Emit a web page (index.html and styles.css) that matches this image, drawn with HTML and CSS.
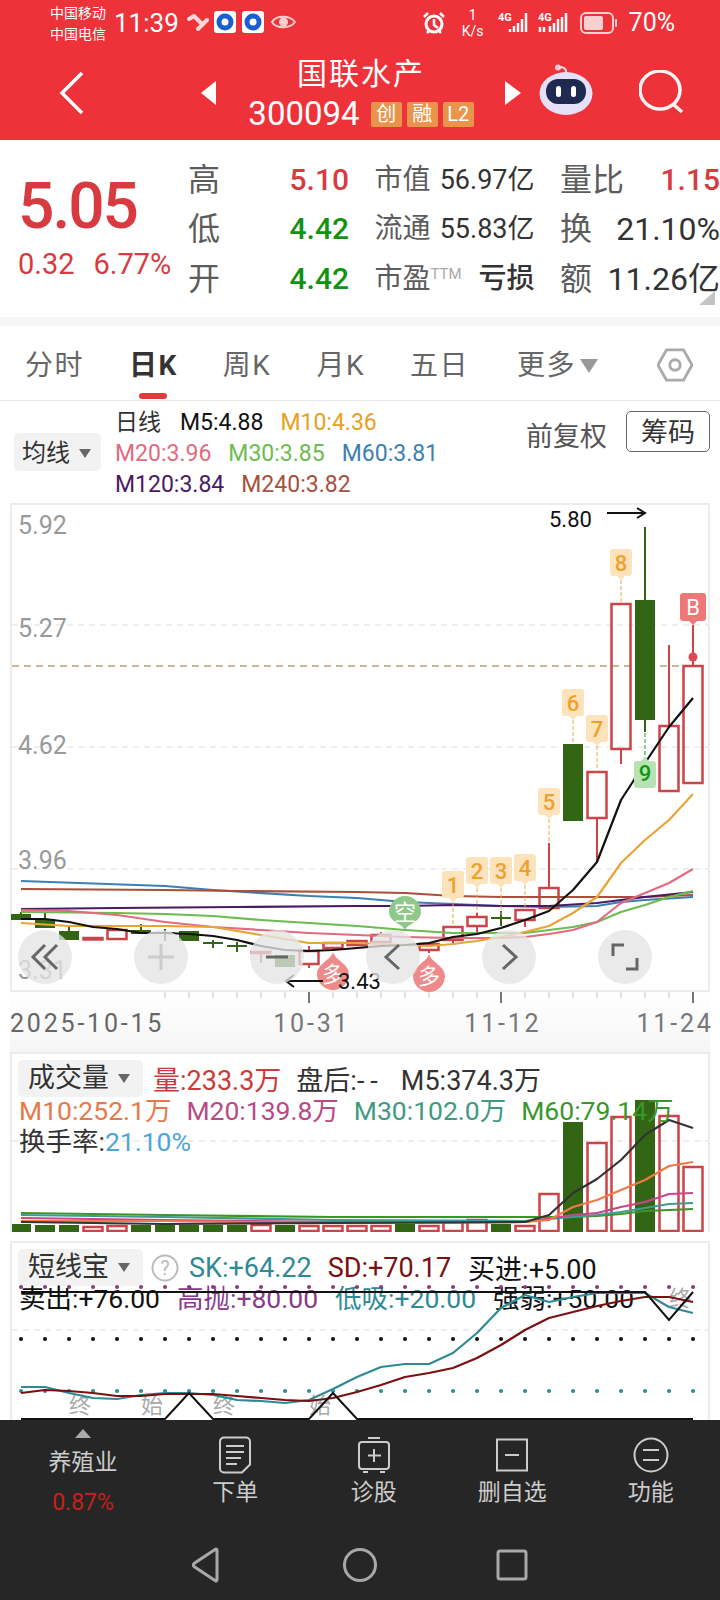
FILE: index.html
```html
<!DOCTYPE html>
<html lang="zh-CN">
<head>
<meta charset="utf-8">
<title>国联水产 300094</title>
<link rel="stylesheet" href="styles.css">
</head>
<body>
<div class="page">

  <header class="head">
    <div class="status">
      <div class="carriers"><span>中国移动</span><span>中国电信</span></div>
      <span class="clock">11:39</span>
      <svg class="status-apps" width="112" height="30" viewBox="0 0 112 30">
        <path class="swoosh" d="M3 11l5-3 7 7M12 21l9-9"/>
        <rect class="app" x="28" y="3" width="22" height="22" rx="3"/>
        <circle class="app-ring" cx="39" cy="14" r="6"/>
        <rect class="app" x="56" y="3" width="22" height="22" rx="3"/>
        <circle class="app-ring" cx="67" cy="14" r="6"/>
        <path class="eye" d="M86 14c4-7 18-7 23 0-5 7-19 7-23 0z"/>
        <circle class="eye-dot" cx="97.500" cy="14" r="4.500"/>
      </svg>
      <div class="status-right">
        <svg class="alarm" width="24" height="26" viewBox="0 0 24 26">
          <circle cx="12" cy="14" r="8" class="alarm-ring"/>
          <path class="alarm-hand" d="M12 9v6l4 3M2 7l4-4M22 7l-4-4M5 23l2-2M19 23l-2-2"/>
        </svg>
        <div class="speed"><span>1</span><span>K/s</span></div>
        <svg class="signal" width="74" height="26" viewBox="0 0 74 26">
          <text x="0" y="11" class="net">4G</text>
          <path class="bars" d="M12 22v-3M16 22v-6M20 22v-9M24 22v-13M28 22V3"/>
          <text x="40" y="11" class="net">4G</text>
          <path class="bars" d="M42 22v-5M46 22v-5M52 22v-6M56 22v-9M60 22v-13M68 22V3M64 22V7"/>
        </svg>
        <svg class="battery" width="38" height="24" viewBox="0 0 38 24">
          <rect x="1" y="2" width="32" height="20" rx="5" class="batt-frame"/>
          <rect x="4" y="5" width="19" height="14" rx="2" class="batt-fill"/>
          <rect x="35" y="8" width="2" height="8" rx="1" class="batt-fill"/>
        </svg>
        <span class="percent">70%</span>
      </div>
    </div>
    <div class="nav">
      <svg class="back" width="26" height="44" viewBox="0 0 26 44"><path d="M23 2L3 22l20 20"/></svg>
      <svg class="step step-prev" width="16" height="24" viewBox="0 0 16 24"><path d="M15 0v24L0 12z"/></svg>
      <div class="title-block">
        <div class="stock-name">国联水产</div>
        <div class="stock-code">
          <span class="code">300094</span>
          <span class="flag">创</span><span class="flag">融</span><span class="flag">L2</span>
        </div>
      </div>
      <svg class="step" width="16" height="24" viewBox="0 0 16 24"><path d="M0 0v24l16-12z"/></svg>
      <svg class="robot" width="54" height="52" viewBox="0 0 54 52">
        <circle class="robot-ball" cx="19" cy="3.500" r="3"/>
        <path class="robot-ant" d="M20 3.500c4-1 8 1 7 6"/>
        <ellipse cx="27" cy="29.500" rx="26.500" ry="21.500" class="robot-shell"/>
        <rect x="7" y="15" width="40" height="25" rx="12" class="robot-face"/>
        <rect x="17" y="22" width="5" height="11" rx="2.500" class="robot-eye"/>
        <rect x="32" y="22" width="5" height="11" rx="2.500" class="robot-eye"/>
      </svg>
      <svg class="search" width="50" height="46" viewBox="0 0 50 46"><ellipse cx="21" cy="20" rx="20" ry="19"/><path d="M34 34l9 8"/></svg>
    </div>
  </header>

  <section class="quote">
    <div class="price-box">
      <div class="price">5.05</div>
      <div class="change"><span>0.32</span><span>6.77%</span></div>
    </div>
    <div class="quote-grid">
      <div class="cell"><span class="lab-lg">高</span><span class="val up">5.10</span></div>
      <div class="cell"><span class="lab-sm">市值</span><span class="amt">56.97亿</span></div>
      <div class="cell"><span class="lab-lg">量比</span><span class="val up">1.15</span></div>
      <div class="cell"><span class="lab-lg">低</span><span class="val down">4.42</span></div>
      <div class="cell"><span class="lab-sm">流通</span><span class="amt">55.83亿</span></div>
      <div class="cell"><span class="lab-lg">换</span><span class="val ink">21.10%</span></div>
      <div class="cell"><span class="lab-lg">开</span><span class="val down">4.42</span></div>
      <div class="cell"><span class="lab-sm">市盈<sup class="ttm">TTM</sup></span><span class="amt cjk">亏损</span></div>
      <div class="cell"><span class="lab-lg">额</span><span class="val ink">11.26亿</span></div>
    </div>
    <svg class="corner" width="16" height="14" viewBox="0 0 16 14"><path d="M16 0v14H0z"/></svg>
  </section>
  <div class="band"></div>

  <nav class="tabs">
    <div class="tab">分时</div>
    <div class="tab tab-on">日K</div>
    <div class="tab">周K</div>
    <div class="tab">月K</div>
    <div class="tab">五日</div>
    <div class="tab tab-more"><span>更多</span><i class="caret caret-lg"></i></div>
    <svg class="hex" width="36" height="36" viewBox="0 0 38 36">
      <path d="M10 2h18l9 16-9 16H10L1 18z"/><circle cx="19" cy="18" r="5.500"/>
    </svg>
  </nav>

  <div class="legend">
    <div class="pill pill-ma">均线<i class="caret"></i></div>
    <div class="ma-rows">
      <div class="ma-row"><span class="ma-head">日线</span><span class="c5">M5:4.88</span><span class="c10">M10:4.36</span></div>
      <div class="ma-row"><span class="c20">M20:3.96</span><span class="c30">M30:3.85</span><span class="c60">M60:3.81</span></div>
      <div class="ma-row"><span class="c120">M120:3.84</span><span class="c240">M240:3.82</span></div>
    </div>
    <div class="legend-side">
      <span class="adjust">前复权</span>
      <span class="chips">筹码</span>
    </div>
  </div>

  <section class="frame kline">
    <svg class="plot" width="696" height="485" viewBox="12 505 696 485">
      <path class="grid" d="M12 625H708M12 747H708M12 869H708"/>
      <path class="last-line" d="M12 666H708"/>
      <text class="axis-y" x="18" y="534">5.92</text>
      <text class="axis-y" x="18" y="637">5.27</text>
      <text class="axis-y" x="18" y="754">4.62</text>
      <text class="axis-y" x="18" y="869">3.96</text>
      <text class="axis-y" x="18" y="979">3.31</text>

      <path class="wick-down" d="M21 912v2M45 912v7M69 927v4M141 924v6M165 929v12M213 940v8M237 942v10M501 911v15M645 527v73M645 720v12"/>
      <path class="body-down" d="M11 914h20v6H11zM35 919h20v9H35zM59 931h20v9H59zM131 930h20v4h-20zM155 932h20v2h-20zM179 931h20v10h-20zM203 942h20v2h-20zM227 945h20v2h-20zM275 955h20v12h-20zM491 917h20v2h-20zM563 744h20v77h-20zM635 600h20v120h-20z"/>
      <path class="wick-up" d="M261 953v10M309 946v4M309 964v4M333 948v3M381 932v3M429 950v3M453 940v5M477 913v4M477 926v7M525 920v7M549 843v45M597 818v44M621 749v15M669 645v81M693 625v41"/>
      <path class="body-up" d="M83.500 938h19v1.500h-19zM107.500 930h19v9h-19zM251.500 952h19v1h-19zM299.500 951h19v13h-19zM323.500 943h19v5h-19zM347.500 941h19v4h-19zM371.500 935h19v7h-19zM419.500 944h19v6h-19zM443.500 927h19v13h-19zM467.500 917h19v9h-19zM515.500 910h19v10h-19zM539.500 888h19v20h-19zM587.500 772h19v46h-19zM611.500 604h19v145h-19zM659.500 726h19v65h-19zM683.500 666h19v117h-19z"/>
      <circle class="dot-up" cx="693" cy="657" r="4.500"/>

      <polyline class="ma m60" points="21,881 165,886 213,890 309,896 357,898 405,902 453,904 501,906 549,907 597,906 621,902 645,900 693,897"/>
      <polyline class="ma m240" points="21,889 165,890 237,891 357,892 405,893 453,896 501,897 549,897 645,897 693,895"/>
      <polyline class="ma m120" points="21,909 117,908 237,907 357,906 405,906 453,905 501,906 549,906 597,903 645,897 693,892"/>
      <polyline class="ma m30" points="21,912 117,913 165,914 213,916 261,920 357,926 405,930 453,933 501,933 525,933 549,930 573,927 597,922 621,912 645,905 669,897 693,891"/>
      <polyline class="ma m20" points="21,910 69,911 117,915 165,922 213,927 261,930 309,933 357,935 405,937 453,938 501,938 525,937 549,934 573,930 597,922 621,903 645,893 669,883 693,869"/>
      <polyline class="ma m10" points="21,923 69,926 117,926 165,926 213,927 261,935 285,939 309,943 333,943 357,943 429,946 453,944 477,941 501,937 525,932 549,926 573,913 597,897 621,863 645,840 669,820 693,794"/>
      <polyline class="ma m5" points="21,919 45,919 69,922 93,927 117,929 141,933 165,933 189,934 213,936 237,940 261,946 285,950 309,951 333,950 357,948 381,946 405,945 429,943 453,937 477,934 501,928 525,920 549,911 573,890 597,862 621,800 645,763 669,727 693,698"/>

      <defs>
        <path id="tag" d="M-8 0h16a3 3 0 0 1 3 3v21a3 3 0 0 1-3 3h-4l-4 4-4-4h-4a3 3 0 0 1-3-3V3a3 3 0 0 1 3-3z"/>
      </defs>
      <path class="lead-amber" d="M453 902v24M477 888v25M501 888v27M525 885v24M549 819v24M573 720v24M597 746v26M621 580v24"/>
      <use class="tag-amber" href="#tag" x="453" y="871"/><text class="tag-text amber" x="453" y="893">1</text>
      <use class="tag-amber" href="#tag" x="477" y="857"/><text class="tag-text amber" x="477" y="879">2</text>
      <use class="tag-amber" href="#tag" x="501" y="857"/><text class="tag-text amber" x="501" y="879">3</text>
      <use class="tag-amber" href="#tag" x="525" y="854"/><text class="tag-text amber" x="525" y="876">4</text>
      <use class="tag-amber" href="#tag" x="549" y="788"/><text class="tag-text amber" x="549" y="810">5</text>
      <use class="tag-amber" href="#tag" x="573" y="689"/><text class="tag-text amber" x="573" y="711">6</text>
      <use class="tag-amber" href="#tag" x="597" y="715"/><text class="tag-text amber" x="597" y="737">7</text>
      <use class="tag-amber" href="#tag" x="621" y="549"/><text class="tag-text amber" x="621" y="571">8</text>
      <path class="lead-green" d="M645 733v25"/>
      <use class="tag-green" href="#tag" transform="translate(645 788) scale(1 -1)"/><text class="tag-text green" x="645" y="781">9</text>
      <path class="tag-red" d="M683 593h20a3 3 0 0 1 3 3v22a3 3 0 0 1-3 3h-6l-4 4-4-4h-6a3 3 0 0 1-3-3v-22a3 3 0 0 1 3-3z"/>
      <text class="tag-text white" x="693" y="615">B</text>

      <path class="drop-green" d="M405 930c-2-6-16-8-16-18a16 16 0 0 1 32 0c0 10-14 12-16 18z"/>
      <text class="drop-text" x="405" y="920">空</text>
      <path class="drop-red" d="M333 952c2 8 16 12 16 22a16 16 0 0 1-32 0c0-10 14-14 16-22z"/>
      <text class="drop-text" x="333" y="982">多</text>
      <path class="drop-red" d="M429 954c2 8 16 12 16 22a16 16 0 0 1-32 0c0-10 14-14 16-22z"/>
      <text class="drop-text" x="429" y="984">多</text>

      <text class="extreme" x="549" y="527">5.80</text>
      <path class="arrow" d="M607 513h38M637 508l8 5-8 5"/>
      <path class="arrow" d="M323 981h-37M294 975l-8 6 8 6"/>
      <text class="extreme" x="338" y="989">3.43</text>
    </svg>
    <div class="float-tools">
      <div class="tool"><svg width="30" height="30" viewBox="0 0 30 30"><path d="M15 3L3 15l12 12M27 3L15 15l12 12"/></svg></div>
      <div class="tool tool-off"><svg width="30" height="30" viewBox="0 0 30 30"><path d="M15 2v26M2 15h26"/></svg></div>
      <div class="tool"><svg width="30" height="30" viewBox="0 0 30 30"><path d="M4 15h22"/></svg></div>
      <div class="tool"><svg width="30" height="30" viewBox="0 0 30 30"><path d="M21 3L8 15l13 12"/></svg></div>
      <div class="tool"><svg width="30" height="30" viewBox="0 0 30 30"><path d="M9 3l13 12L9 27"/></svg></div>
      <div class="tool"><svg width="30" height="30" viewBox="0 0 30 30"><path d="M14 3H3v11M16 27h11V16"/></svg></div>
    </div>
  </section>

  <div class="date-axis">
    <svg class="ticks" width="700" height="12" viewBox="10 992 700 12">
      <path class="tick" d="M165 992v6M189 992v6M213 992v6M237 992v6M261 992v6M285 992v6M333 992v6M357 992v6M381 992v6M405 992v6M429 992v6M453 992v6M477 992v6M525 992v6M549 992v6M573 992v6M597 992v6M621 992v6M645 992v6M669 992v6"/>
      <path class="tick-major" d="M309 992v11M501 992v11M693 992v11"/>
    </svg>
    <div class="dates">
      <span class="date-first">2025-10-15</span>
      <span class="date-b">10-31</span>
      <span class="date-c">11-12</span>
      <span class="date-d">11-24</span>
    </div>
  </div>

  <section class="frame frame-open vol">
    <svg class="plot" width="696" height="178" viewBox="12 1054 696 178">
      <path class="grid" d="M12 1141H708"/>
      <path class="body-down" d="M11 1224h20v8H11zM35 1225h20v7H35zM59 1225h20v7H59zM131 1225h20v7h-20zM155 1225h20v7h-20zM179 1225h20v7h-20zM203 1225h20v7h-20zM227 1225h20v7h-20zM275 1225h20v7h-20zM395 1224h20v8h-20zM491 1224h20v8h-20zM563 1122h20v110h-20zM635 1100h20v132h-20z"/>
      <path class="body-up" d="M83.500 1227h19v4h-19zM107.500 1226h19v5h-19zM251.500 1225h19v6h-19zM299.500 1226h19v5h-19zM323.500 1226h19v5h-19zM347.500 1226h19v5h-19zM371.500 1226h19v5h-19zM419.500 1226h19v5h-19zM443.500 1222h19v9h-19zM467.500 1220h19v11h-19zM515.500 1226h19v5h-19zM539.500 1194h19v37h-19zM587.500 1143h19v88h-19zM611.500 1117h19v114h-19zM659.500 1116h19v115h-19zM683.500 1167h19v64h-19z"/>
      <polyline class="ma v60" points="21,1213 165,1215 333,1217 525,1217 573,1217 597,1216 621,1214 645,1211 669,1210 693,1209"/>
      <polyline class="ma v30" points="21,1215 165,1217 333,1220 525,1221 573,1217 597,1215 621,1212 645,1208 669,1204 693,1203"/>
      <polyline class="ma v20" points="21,1218 165,1220 333,1222 525,1222 573,1215 597,1213 621,1207 645,1202 669,1194 693,1193"/>
      <polyline class="ma v10" points="21,1221 165,1221 333,1223 525,1222 549,1220 573,1207 597,1200 621,1190 645,1180 669,1166 693,1162"/>
      <polyline class="ma v5" points="21,1222 165,1224 333,1223 525,1222 549,1215 573,1193 597,1179 621,1160 645,1135 669,1120 693,1128"/>
    </svg>
    <div class="overlay-text">
      <div class="info-row info-first">
        <div class="pill pill-panel">成交量<i class="caret"></i></div>
        <span class="vol-now">量:233.3万</span>
        <span class="after-hours">盘后:<span class="dash">--</span></span>
        <span class="ink-soft">M5:374.3万</span>
      </div>
      <div class="info-row info-tight info-pull">
        <span class="v10-t">M10:252.1万</span>
        <span class="v20-t">M20:139.8万</span>
        <span class="v30-t">M30:102.0万</span>
        <span class="v60-t">M60:79.14万</span>
      </div>
      <div class="info-row info-tight"><span class="ink-soft">换手率:<span class="turnover">21.10%</span></span></div>
    </div>
  </section>

  <div class="panel-gap"></div>

  <section class="frame frame-open kdj">
    <div class="overlay-text">
      <div class="info-row info-first">
        <div class="pill pill-panel">短线宝<i class="caret"></i></div>
        <svg class="help" width="28" height="28" viewBox="0 0 28 28"><circle cx="14" cy="14" r="12.500"/><text x="14" y="21">?</text></svg>
        <span class="sk">SK:+64.22</span>
        <span class="sd">SD:+70.17</span>
        <span class="ink-hard">买进:+5.00</span>
      </div>
      <div class="info-row info-spread">
        <span class="ink-hard">卖出:+76.00</span>
        <span class="high">高抛:+80.00</span>
        <span class="sk">低吸:+20.00</span>
        <span class="ink-hard">强弱:+50.00</span>
      </div>
    </div>
    <svg class="plot" width="696" height="177" viewBox="12 1243 696 177">
      <path class="grid" d="M12 1330H708"/>
      <path class="dots-purple" d="M21 1287h.01M45 1287h.01M69 1287h.01M93 1287h.01M117 1287h.01M141 1287h.01M165 1287h.01M189 1287h.01M213 1287h.01M237 1287h.01M261 1287h.01M285 1287h.01M309 1287h.01M333 1287h.01M357 1287h.01M381 1287h.01M405 1287h.01M429 1287h.01M453 1287h.01M477 1287h.01M501 1287h.01M525 1287h.01M549 1287h.01M573 1287h.01M597 1287h.01M621 1287h.01M645 1287h.01M669 1287h.01M693 1287h.01"/>
      <path class="dots-black" d="M21 1339h.01M45 1339h.01M69 1339h.01M93 1339h.01M117 1339h.01M141 1339h.01M165 1339h.01M189 1339h.01M213 1339h.01M237 1339h.01M261 1339h.01M285 1339h.01M309 1339h.01M333 1339h.01M357 1339h.01M381 1339h.01M405 1339h.01M429 1339h.01M453 1339h.01M477 1339h.01M501 1339h.01M525 1339h.01M549 1339h.01M573 1339h.01M597 1339h.01M621 1339h.01M645 1339h.01M669 1339h.01M693 1339h.01"/>
      <path class="dots-teal" d="M21 1391h.01M45 1391h.01M69 1391h.01M93 1391h.01M117 1391h.01M141 1391h.01M165 1391h.01M189 1391h.01M213 1391h.01M237 1391h.01M261 1391h.01M285 1391h.01M309 1391h.01M333 1391h.01M357 1391h.01M381 1391h.01M405 1391h.01M429 1391h.01M453 1391h.01M477 1391h.01M501 1391h.01M525 1391h.01M549 1391h.01M573 1391h.01M597 1391h.01M621 1391h.01M645 1391h.01M669 1391h.01M693 1391h.01"/>
      <text class="phase" x="80" y="1413">终</text>
      <text class="phase" x="152" y="1413">始</text>
      <text class="phase" x="224" y="1413">终</text>
      <text class="phase" x="320" y="1413">始</text>
      <text class="phase" x="680" y="1306">终</text>
      <polyline class="ma sk-line" points="21,1387 45,1387 69,1393 93,1398 117,1399 141,1395 165,1393 189,1393 213,1395 237,1400 261,1401 285,1403 309,1400 333,1389 357,1377 381,1367 405,1364 429,1364 453,1353 477,1333 501,1308 525,1295 549,1302 573,1297 597,1293 621,1293 645,1293 669,1307 693,1313"/>
      <polyline class="ma sd-line" points="21,1393 45,1390 69,1391 93,1393 117,1396 141,1396 165,1394 189,1394 213,1394 237,1396 261,1398 285,1400 309,1401 333,1398 357,1392 381,1385 405,1377 429,1373 453,1368 477,1358 501,1345 525,1330 549,1318 573,1312 597,1306 621,1301 645,1297 669,1297 693,1302"/>
      <polyline class="strength" points="21,1292 645,1292 669,1320 693,1292"/>
      <polyline class="strength" points="21,1419 165,1419 189,1393 213,1419 309,1419 333,1393 357,1419 693,1419"/>
    </svg>
  </section>

  <footer class="dock">
    <div class="dock-tabs">
      <div class="dock-sector">
        <i class="sector-up"></i>
        <span class="sector-name">养殖业</span>
        <span class="sector-rate">0.87%</span>
      </div>
      <div class="dock-item">
        <svg width="34" height="38" viewBox="0 0 34 38"><path d="M6 1.500h22a4 4 0 0 1 4 4v23l-8 8H6a4 4 0 0 1-4-4v-27a4 4 0 0 1 4-4z"/><path d="M8 10h18M8 16h18M8 22h15M8 28h11"/></svg>
        <span>下单</span>
      </div>
      <div class="dock-item">
        <svg width="38" height="38" viewBox="0 0 38 38"><path d="M13 2h12M7 6h24a3 3 0 0 1 3 3v21a3 3 0 0 1-3 3H7a3 3 0 0 1-3-3V9a3 3 0 0 1 3-3zM19 13v13M13 19.500h13M8 36h5M25 36h5"/></svg>
        <span>诊股</span>
      </div>
      <div class="dock-item">
        <svg width="34" height="34" viewBox="0 0 34 34"><path d="M2 1.500h30v31H2zM10 17h14"/></svg>
        <span>删自选</span>
      </div>
      <div class="dock-item">
        <svg width="36" height="36" viewBox="0 0 36 36"><circle cx="18" cy="18" r="16.500"/><path d="M10 13h16M10 23h16"/></svg>
        <span>功能</span>
      </div>
    </div>
    <div class="keys">
      <svg width="32" height="36" viewBox="0 0 32 36"><path d="M27 3v30a1 1 0 0 1-1.600.800L4 19.500a2 2 0 0 1 0-3L25.400 2.200A1 1 0 0 1 27 3z"/></svg>
      <svg width="36" height="36" viewBox="0 0 36 36"><circle cx="18" cy="18" r="15.500"/></svg>
      <svg class="key-last" width="32" height="32" viewBox="0 0 32 32"><rect x="2" y="2" width="28" height="28" rx="2"/></svg>
    </div>
  </footer>
</div>
</body>
</html>
```
FILE: styles.css
```css
* { box-sizing: border-box; }

html, body {
  margin: 0;
  padding: 0;
  background: #fff;
}

body {
  width: 720px;
  height: 1600px;
  overflow: hidden;
  font-family: Roboto, "Noto Sans CJK SC", sans-serif;
  color: #333;
}

.page {
  width: 720px;
  height: 1600px;
  display: flex;
  flex-direction: column;
}

/* red title area */
.head {
  height: 140px;
  background: #ee3239;
  color: #fff;
}

.status {
  height: 46px;
  display: flex;
  align-items: center;
  padding-left: 50px;
}

.carriers {
  width: 64px;
  display: flex;
  flex-direction: column;
  font-size: 14px;
  line-height: 21px;
  margin-top: 1px;
}

.clock {
  font-size: 26px;
  line-height: 30px;
  width: 70px;
}

.status-apps { margin-left: 2px; flex: none; }
.swoosh { fill: none; stroke: #ffd9d9; stroke-width: 4; stroke-linecap: round; stroke-linejoin: round; }
.app { fill: #fff; }
.app-ring { fill: none; stroke: #1a5fd0; stroke-width: 5; }
.eye { fill: none; stroke: #f8d0d0; stroke-width: 2; }
.eye-dot { fill: #f8d0d0; }

.status-right {
  margin-left: auto;
  padding-right: 45px;
  display: flex;
  align-items: center;
}

.alarm-ring { fill: none; stroke: #fff; stroke-width: 3; }
.alarm-hand { fill: none; stroke: #fff; stroke-width: 2.500; }

.speed {
  margin-left: 14px;
  width: 26px;
  display: flex;
  flex-direction: column;
  align-items: center;
  font-size: 14px;
  line-height: 16px;
}

.signal { margin-left: 12px; }
.net { font-size: 11px; font-weight: 700; fill: #fff; }
.bars { stroke: #fff; stroke-width: 2.500; }

.battery { margin-left: 8px; }
.batt-frame { fill: none; stroke: #f9d0d0; stroke-width: 2; }
.batt-fill { fill: #f9d0d0; }

.percent {
  margin-left: 11px;
  font-size: 25px;
  line-height: 30px;
}

.nav {
  height: 94px;
  display: flex;
  align-items: center;
  padding-left: 59px;
}

.back path {
  fill: none;
  stroke: #fff;
  stroke-width: 3.500;
}

.step { flex: none; fill: #fff; }
.step-prev { margin-left: 116px; }

.title-block {
  width: 288px;
  display: flex;
  flex-direction: column;
  align-items: center;
}

.stock-name {
  font-size: 30px;
  line-height: 38px;
  letter-spacing: 2px;
}

.stock-code {
  display: flex;
  align-items: center;
  gap: 5px;
  margin-top: 4px;
}

.code {
  font-size: 33px;
  line-height: 34px;
  margin-right: 6px;
}

.flag {
  height: 25px;
  min-width: 31px;
  padding: 0 3px;
  background: #e8954b;
  border-radius: 2px;
  font-size: 20px;
  line-height: 25px;
  text-align: center;
}

.robot { margin: 0 0 6px 18px; flex: none; }
.robot-ball { fill: #f3c9cf; }
.robot-ant { fill: none; stroke: #f3dfe8; stroke-width: 2; }
.robot-shell { fill: #e4e0f7; }
.robot-face { fill: #1f2a50; }
.robot-eye { fill: #fff; }

.search { margin-left: 46px; flex: none; fill: none; stroke: #fff3f3; stroke-width: 3.500; }

/* price summary */
.quote {
  height: 177px;
  display: flex;
  position: relative;
  overflow: hidden;
}

.price-box {
  width: 188px;
  padding: 30px 0 0 18px;
  color: #d83a3f;
}

.price {
  font-size: 64px;
  font-weight: 500;
  line-height: 74px;
  letter-spacing: -2px;
}

.change {
  display: flex;
  gap: 19px;
  margin-top: 2px;
  font-size: 29px;
  line-height: 36px;
}

.quote-grid {
  width: 532px;
  padding-top: 15px;
  display: grid;
  grid-template-columns: 161px 160px 160px;
  grid-auto-rows: 49.500px;
  column-gap: 25.500px;
  align-items: center;
}

.cell {
  display: flex;
  justify-content: space-between;
  align-items: center;
  white-space: nowrap;
}

.lab-lg { font-size: 32px; line-height: 40px; color: #5c5c5c; }
.lab-sm { font-size: 28px; line-height: 40px; color: #5c5c5c; }

.ttm {
  font-size: 15px;
  line-height: 0;
  color: #aaa;
  vertical-align: 9px;
}

.val { font-size: 30px; font-weight: 500; line-height: 40px; }
.amt { font-size: 27px; line-height: 40px; color: #333; }
.amt.cjk { font-size: 28px; font-weight: 500; }
.up { color: #d83a3f; }
.down { color: #119311; }
.val.ink { color: #333; font-size: 32px; font-weight: 400; }

.corner {
  position: absolute;
  right: 5px;
  bottom: 12px;
  fill: #c4c4c4;
}

.band { height: 9px; background: #f6f6f6; }

/* period tabs */
.tabs {
  height: 75px;
  border-bottom: 1px solid #e8e8e8;
  padding: 22px 27px 0 25px;
  display: flex;
  align-items: flex-start;
  gap: 45px;
}

.tab {
  font-size: 28px;
  line-height: 36px;
  letter-spacing: 1.500px;
  color: #666;
  white-space: nowrap;
}

.tab-on {
  font-weight: 700;
  color: #333;
  display: flex;
  flex-direction: column;
  align-items: center;
}

.tab-on::after {
  content: "";
  width: 28px;
  height: 6px;
  margin-top: 9px;
  border-radius: 3px;
  background: #e03a3a;
}

.tab-more {
  display: flex;
  align-items: center;
  margin-left: 3px;
}

.caret {
  display: inline-block;
  width: 0;
  height: 0;
  margin-left: 9px;
  border: solid transparent;
  border-width: 9px 6.500px 0;
  border-top-color: #666;
}

.caret-lg {
  margin-left: 4px;
  border-width: 14px 9px 0;
  border-top-color: #999;
}

.hex {
  margin-left: auto;
  margin-top: -1px;
  fill: none;
  stroke: #aaa;
  stroke-width: 3;
}

/* moving average legend */
.legend {
  height: 102px;
  display: flex;
  padding: 6px 10px 0 14px;
  font-size: 23px;
}

.pill {
  display: flex;
  align-items: center;
  background: #f2f2f2;
  border-radius: 5px;
  color: #333;
  white-space: nowrap;
}

.pill-ma {
  width: 87px;
  height: 38px;
  margin-top: 26px;
  padding: 3px 0 0 8px;
  font-size: 24px;
  line-height: 35px;
}

.ma-rows {
  margin-left: 14px;
  display: flex;
  flex-direction: column;
}

.ma-row {
  display: flex;
  gap: 17px;
  line-height: 31px;
  white-space: nowrap;
}

.ma-head { color: #333; margin-right: 2px; }
.c5 { color: #111; }
.c10 { color: #e8a020; }
.c20 { color: #e46a80; }
.c30 { color: #6cbc50; }
.c60 { color: #3d7fb0; }
.c120 { color: #4a1a63; }
.c240 { color: #a8503c; }

.legend-side {
  margin-left: auto;
  display: flex;
  align-items: center;
  gap: 19px;
  height: 41px;
  margin-top: 4px;
  font-size: 27px;
}

.adjust { color: #555; padding-top: 5px; }

.chips {
  width: 84px;
  height: 41px;
  line-height: 43px;
  text-align: center;
  border: 1px solid #666;
  border-radius: 5px;
  color: #333;
}

/* chart frames */
.frame {
  position: relative;
  width: 700px;
  margin: 0 10px;
  border: 2px solid #ececec;
  background: #fff;
}

.frame-open { border-bottom: 0; }
.kline { height: 489px; }
.vol { height: 180px; }
.kdj { height: 179px; overflow: hidden; }

.plot { display: block; overflow: hidden; }
.kline .plot { overflow: visible; }

.grid { fill: none; stroke: #ddd; stroke-width: 1; stroke-dasharray: 6 5; }
.last-line { fill: none; stroke: #b8a078; stroke-width: 1.500; stroke-dasharray: 7 5; }

.axis-y { font-size: 25px; fill: #999; }

.wick-down { fill: none; stroke: #336614; stroke-width: 2; }
.body-down { fill: #336614; }
.wick-up { fill: none; stroke: #cc4348; stroke-width: 2; }
.body-up { fill: none; stroke: #cc4348; stroke-width: 2.500; }
.dot-up { fill: #e0474e; }

.ma { fill: none; stroke-width: 2.200; stroke-linejoin: round; }
.m5 { stroke: #111; }
.m10 { stroke: #e8a436; }
.m20 { stroke: #e46a80; }
.m30 { stroke: #6cbc50; }
.m60 { stroke: #3d7fb0; }
.m120 { stroke: #4a1a63; }
.m240 { stroke: #a8503c; }

.lead-amber { fill: none; stroke: #eaa84a; stroke-width: 1; stroke-dasharray: 4 2; }
.lead-green { fill: none; stroke: #1f9a2a; stroke-width: 1; stroke-dasharray: 4 2; }
.tag-amber { fill: #fde3bc; }
.tag-green { fill: #b8e2b4; }
.tag-red { fill: #ee7777; }

.tag-text { font-size: 22px; font-weight: 500; text-anchor: middle; }
.tag-text.amber { fill: #efa02e; }
.tag-text.green { fill: #0a9a0a; }
.tag-text.white { fill: #fff; font-weight: 400; }

.drop-green { fill: #8fc98a; }
.drop-red { fill: #ee8a8a; }
.drop-text { font-size: 22px; fill: #fff; text-anchor: middle; }

.extreme { font-size: 22px; fill: #111; }
.arrow { fill: none; stroke: #111; stroke-width: 2; }

/* round controls floating on the chart */
.float-tools {
  position: absolute;
  left: 5.500px;
  top: 425px;
  display: flex;
  gap: 62px;
}

.tool {
  width: 54px;
  height: 54px;
  border-radius: 50%;
  background: rgba(228, 228, 228, 0.78);
  display: flex;
  align-items: center;
  justify-content: center;
}

.tool svg { fill: none; stroke: #666; stroke-width: 3; }
.tool-off svg { stroke: #ccc; }

/* date axis */
.date-axis {
  height: 60px;
  width: 700px;
  margin: 0 10px;
  background: linear-gradient(#fff, #f5f5f5);
}

.ticks { display: block; }
.tick { stroke: #c4c4c4; stroke-width: 1; }
.tick-major { stroke: #777; stroke-width: 2; }

.dates {
  display: flex;
  margin-top: 3px;
  font-size: 25px;
  line-height: 34px;
  letter-spacing: 2.800px;
  color: #777;
  white-space: nowrap;
}

.date-first { color: #666; }
.date-b { margin-left: 109px; }
.date-c { margin-left: 114px; }
.date-d { margin-left: 95px; }

/* lower panels */
.overlay-text {
  position: absolute;
  left: 6px;
  top: 6px;
  right: 0;
  font-size: 27px;
  white-space: nowrap;
}

.info-row {
  display: flex;
  align-items: center;
  gap: 16px;
  color: #333;
}

.info-first { height: 37px; gap: 10px; }
.info-tight { height: 31px; gap: 15px; padding-left: 1px; font-size: 26.500px; }
.info-pull { margin-top: -4.500px; }
.info-spread { height: 28px; margin-top: -4px; gap: 17px; padding-left: 1px; font-size: 26.500px; }

.pill-panel {
  width: 125px;
  height: 37px;
  padding-left: 10px;
  font-size: 27px;
  line-height: 37px;
}

.vol-now { color: #cc3a3a; }
.after-hours { color: #333; margin-left: 5px; }
.dash { letter-spacing: 6px; }
.ink-soft { color: #333; margin-left: 7px; }
.info-tight .ink-soft { margin-left: 0; }
.turnover { color: #4aa5dd; }
.v10-t { color: #e8784a; }
.v20-t { color: #b84a85; }
.v30-t { color: #3f9a82; }
.v60-t { color: #3a962a; }

.v5 { stroke: #333; }
.v10 { stroke: #ef7a45; }
.v20 { stroke: #c8468c; }
.v30 { stroke: #3f9a90; }
.v60 { stroke: #3a962a; }

.panel-gap { height: 9px; }

.kdj .plot { position: relative; }

.help { margin: 0 0 0 -2px; flex: none; }
.help circle { fill: none; stroke: #bbb; stroke-width: 2; }
.help text { font-size: 20px; fill: #bbb; text-anchor: middle; }

.sk { color: #2e8a94; }
.sd { color: #7a1010; margin-left: 6px; }
.ink-hard { color: #111; }
.kdj .info-first .ink-hard { margin-left: 7px; }
.high { color: #8a3a8a; }

.dots-purple { stroke: #8a3a8a; stroke-width: 4; stroke-linecap: round; fill: none; }
.dots-black { stroke: #111; stroke-width: 4; stroke-linecap: round; fill: none; }
.dots-teal { stroke: #2e8a94; stroke-width: 4; stroke-linecap: round; fill: none; }

.phase { font-size: 22px; fill: #aaa; text-anchor: middle; }
.sk-line { stroke: #2e8a94; }
.sd-line { stroke: #7a1010; }
.strength { fill: none; stroke: #111; stroke-width: 2; }

/* bottom dock */
.dock {
  height: 180px;
  background: #262626;
  color: #ccc;
}

.dock-tabs {
  height: 110px;
  display: grid;
  grid-template-columns: 166px repeat(4, 138.500px);
}

.dock-sector {
  display: flex;
  flex-direction: column;
  align-items: center;
  padding-top: 9px;
}

.sector-up {
  width: 0;
  height: 0;
  border: solid transparent;
  border-width: 0 8px 9px;
  border-bottom-color: #aaa;
}

.sector-name { margin-top: 10px; font-size: 23px; line-height: 30px; }
.sector-rate { margin-top: 10px; font-size: 23px; line-height: 30px; color: #c8201a; }

.dock-item {
  display: flex;
  flex-direction: column;
  align-items: center;
  padding-top: 16px;
  font-size: 23px;
  line-height: 30px;
}

.dock-item svg {
  height: 38px;
  margin-bottom: 4px;
  fill: none;
  stroke: #ccc;
  stroke-width: 2;
}

.keys {
  height: 70px;
  padding-left: 190px;
  display: flex;
  align-items: center;
  gap: 120px;
}

.keys svg {
  flex: none;
  fill: none;
  stroke: #a8a8a8;
  stroke-width: 3;
}

.keys .key-last { margin-left: -2px; }
```
